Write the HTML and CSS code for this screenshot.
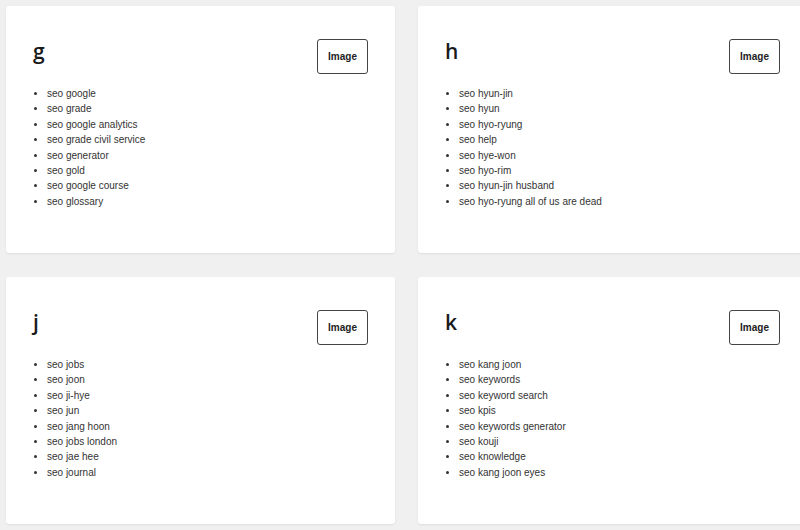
FILE: index.html
```html
<!DOCTYPE html>
<html lang="en">
<head>
    <meta charset="UTF-8">
    <meta name="viewport" content="width=device-width, initial-scale=1.0">
    <title>SEO keywords</title>
    <link rel="stylesheet" href="styles.css">
</head>
<body>

<div class="card-grid">
    <div class="card">
        <div class="card-header">
            <div class="letter">g</div>
            <button class="image-button">Image</button>
        </div>
        <ul class="keywords">
            <li>seo google</li>
            <li>seo grade</li>
            <li>seo google analytics</li>
            <li>seo grade civil service</li>
            <li>seo generator</li>
            <li>seo gold</li>
            <li>seo google course</li>
            <li>seo glossary</li>
        </ul>
    </div>

    <div class="card">
        <div class="card-header">
            <div class="letter">h</div>
            <button class="image-button">Image</button>
        </div>
        <ul class="keywords">
            <li>seo hyun-jin</li>
            <li>seo hyun</li>
            <li>seo hyo-ryung</li>
            <li>seo help</li>
            <li>seo hye-won</li>
            <li>seo hyo-rim</li>
            <li>seo hyun-jin husband</li>
            <li>seo hyo-ryung all of us are dead</li>
        </ul>
    </div>

    <div class="card">
        <div class="card-header">
            <div class="letter">j</div>
            <button class="image-button">Image</button>
        </div>
        <ul class="keywords">
            <li>seo jobs</li>
            <li>seo joon</li>
            <li>seo ji-hye</li>
            <li>seo jun</li>
            <li>seo jang hoon</li>
            <li>seo jobs london</li>
            <li>seo jae hee</li>
            <li>seo journal</li>
        </ul>
    </div>

    <div class="card">
        <div class="card-header">
            <div class="letter">k</div>
            <button class="image-button">Image</button>
        </div>
        <ul class="keywords">
            <li>seo kang joon</li>
            <li>seo keywords</li>
            <li>seo keyword search</li>
            <li>seo kpis</li>
            <li>seo keywords generator</li>
            <li>seo kouji</li>
            <li>seo knowledge</li>
            <li>seo kang joon eyes</li>
        </ul>
    </div>
</div>

</body>
</html>
```

FILE: styles.css
```css
* {
    margin: 0;
    padding: 0;
    box-sizing: border-box;
}

body {
    font-family: 'Liberation Sans', Arial, sans-serif;
    background: #eff0ef;
    color: #333;
    padding: 6px;
    overflow: hidden;
}

.card-grid {
    display: grid;
    grid-template-columns: 389px 389px;
    column-gap: 23px;
    row-gap: 24px;
}

.card {
    background: #fff;
    border-radius: 3px;
    box-shadow: 0 1px 2px rgba(0, 0, 0, 0.08);
    height: 247px;
    padding: 33px 27px 0 27px;
}

.card-header {
    display: flex;
    justify-content: space-between;
    align-items: flex-start;
}

.letter {
    font-family: 'Open Sans', sans-serif;
    font-size: 21px;
    line-height: 21px;
    font-weight: 600;
    color: #1a1a1a;
    margin-top: 2px;
}

.image-button {
    width: 51px;
    height: 35px;
    background: #fff;
    border: 1px solid #444;
    border-radius: 3px;
    font-family: 'Liberation Sans', Arial, sans-serif;
    font-size: 10px;
    font-weight: bold;
    color: #222;
    cursor: pointer;
}

.keywords {
    margin-top: 12px;
    padding-left: 14px;
    font-size: 10px;
    line-height: 15.4px;
}
```
